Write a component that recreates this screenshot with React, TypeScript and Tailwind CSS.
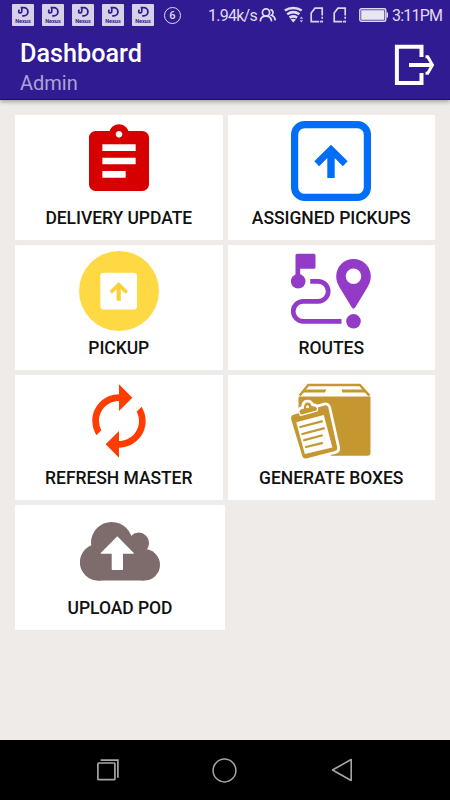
import type { ReactNode } from 'react'
import { MdAssignment, MdAutorenew } from 'react-icons/md'

function AppBadge() {
  return (
    <div className="flex h-[22px] w-[22px] flex-col items-center rounded-[1px] bg-[#d6d1e9] text-[#311b92]">
      <svg width="22" height="14" viewBox="0 0 22 14" fill="none" stroke="currentColor">
        <path d="M8.600 3.600h3.200a4.100 4.100 0 0 1 0 8.200h-1.600" strokeWidth="1.800" />
        <path d="M9.800 3.200v4.600M7.300 5.600C6.200 7.400 6.500 9 8.200 8.800l2-.7" strokeWidth="1.700" />
      </svg>
      <span className="text-[5.5px] leading-[7px] font-bold">Nexus</span>
    </div>
  )
}

function SimIcon() {
  return (
    <svg width="14" height="16" viewBox="0 0 14 16" fill="none" stroke="#d9d4ec" strokeWidth="1.700">
      <path d="M9 14.700H1.200V6L5 1.200h7.200v7.300" />
      <path d="M12.200 9.800v1.900M12.200 13.500v2M9.800 14.700h1.400" />
    </svg>
  )
}

function StatusBar() {
  return (
    <div className="flex h-[30px] items-center text-[16px] text-[#e0dcf0]">
      <div className="ml-3 flex w-[152px] gap-2">
        {[0, 1, 2, 3, 4].map((i) => (
          <AppBadge key={i} />
        ))}
      </div>
      <div className="flex h-[17px] w-[17px] items-center justify-center rounded-full border-[1.5px] border-[#e0dcf0] text-[11px] leading-none font-medium">
        6
      </div>
      <span className="ml-[27px] w-[50px] pt-px tracking-[-0.75px] whitespace-nowrap">1.94k/s</span>
      <svg className="ml-[1px]" width="18" height="16" viewBox="0 0 18 16" fill="none" stroke="#e0dcf0" strokeWidth="1.700">
        <circle cx="7" cy="5.500" r="3.600" />
        <path d="M1.200 14.300c.4-3.400 2.400-5.200 5.800-5.200s5.200 1.800 5.600 5.200M11.300 2.700c3 .2 3.800 4 1.200 5.600 2.500.8 3.500 2.500 3.800 5" />
      </svg>
      <svg className="ml-[7px]" width="20" height="18" viewBox="0 0 20 18" fill="none" stroke="#e0dcf0" strokeWidth="2.500">
        <path d="M.8 4.500c5-3.400 11.900-3.400 16.900 0M3.200 8.200c3.700-2.500 8.500-2.500 12.200 0M5.600 11.600c2.300-1.500 5.200-1.500 7.500 0" />
        <path d="M6.600 13.600c1.600-1 3.800-1 5.400 0L9.300 16.500z" fill="#e0dcf0" stroke="none" />
        <path d="m17.400 10.500 1.800 2.200h-3.600zM17.400 16.500l1.800-2.200h-3.600z" fill="#bdb4dc" stroke="none" />
      </svg>
      <div className="ml-[6px] flex gap-[9px]">
        <SimIcon />
        <SimIcon />
      </div>
      <svg className="ml-[12px]" width="30" height="14" viewBox="0 0 30 14" fill="none">
        <rect x=".8" y=".8" width="26" height="12.400" rx="1.500" stroke="#e0dcf0" strokeWidth="1.400" />
        <rect x="2.200" y="2.200" width="23.200" height="9.600" fill="#e9e6f4" />
        <path d="M27.500 4.500H29v5h-1.500" fill="#e0dcf0" />
      </svg>
      <span className="ml-[3px] pt-px tracking-[-0.8px] whitespace-nowrap">3:11PM</span>
    </div>
  )
}

function Header() {
  return (
    <header className="relative h-[100px] border-b border-[#1c0a80] bg-[#311b92] shadow-[0_2px_4px_rgba(0,0,0,0.3)]">
      <StatusBar />
      <div className="flex justify-between pr-[14px] pl-5">
        <div>
          <h1 className="pt-[10px] text-[25.2px] leading-[28px] font-medium text-white">Dashboard</h1>
          <p className="pt-[3px] text-[20px] leading-[24px] text-[#aca3d4]">Admin</p>
        </div>
        <svg className="mt-[14px]" width="42" height="42" viewBox="0 0 42 42" fill="none" stroke="#fff" strokeWidth="4">
          <path d="M27.500 13V2.800H2.900v36.200h24.600V29" />
          <path d="M15 21h23" strokeWidth="4" />
          <path d="M31.500 12.800h2.200L38.500 21l-4.800 8.200h-2.200" strokeWidth="3" />
        </svg>
      </div>
    </header>
  )
}

function AssignedIcon() {
  return (
    <svg width="80" height="80" viewBox="0 0 80 80" fill="#026df7">
      <rect x="3.600" y="3.600" width="72.800" height="72.800" rx="10" fill="none" stroke="#026df7" strokeWidth="7.200" />
      <path d="m40 23.700 16.700 16.600-4.900 4.900-8.100-8.100V57h-7.400V37.100l-8.100 8.100-4.900-4.900z" />
    </svg>
  )
}

function PickupIcon() {
  return (
    <svg width="80" height="80" viewBox="0 0 80 80">
      <circle cx="40" cy="40" r="40" fill="#ffd944" />
      <rect x="21.300" y="21.700" width="36.700" height="36.900" rx="3.500" fill="#fff" />
      <path d="m39.700 31 9.300 9.200-2.500 2.600-4.700-4.600v11.600h-4.200V38.200l-4.700 4.600-2.500-2.600z" fill="#fbcf38" />
    </svg>
  )
}

function RoutesIcon() {
  return (
    <svg width="80" height="80" viewBox="0 0 80 80" fill="#933ac6">
      <path d="M4.500 4.200q0-1.500 1.500-1.500h17q1.500 0 1.500 1.500v12q0 1.500-1.500 1.500H9.200v8H4.500z" />
      <circle cx="7.200" cy="30.300" r="7.300" />
      <path d="M19.200 30.300h8a10 10 0 0 1 0 20h-15a10 10 0 0 0 0 20h38.300" fill="none" stroke="#933ac6" strokeWidth="4.700" />
      <path
        fillRule="evenodd"
        d="M62.500 8a17.300 17.300 0 0 0-17.300 17.300c0 4 1.200 7.500 3.300 11l12.300 20.300q1.700 2.200 3.400 0l12.300-20.300c2.100-3.500 3.300-7 3.300-11A17.300 17.300 0 0 0 62.500 8zm0 9.500a7.800 7.800 0 1 1 0 15.600 7.800 7.800 0 0 1 0-15.600z"
      />
      <circle cx="62.500" cy="70.300" r="7.300" />
    </svg>
  )
}

function BoxesIcon() {
  return (
    <svg width="80" height="80" viewBox="0 0 80 80" fill="#c59730">
      <path d="M7.500 15.600h72v56.200q0 3-3 3H40L7.500 40z" />
      <path d="M8.700 14.600 17.300 4h51.500l9.600 10.600" fill="none" stroke="#c59730" strokeWidth="2.400" />
      <path d="M14 8.400h21.500l-1.700 3H11.700zM50.600 8.400h22.200l2.600 3h-24z" />
      {/* clipboard laid over the box, with a white edge */}
      <g stroke="#fff" strokeWidth="5.500" strokeLinejoin="round">
        <path d="m3 33.600 30.500-9.200q3-.8 3.800 2.200l8.900 39.700q.7 3-2.300 3.800l-28.700 7.300q-3 .8-3.800-2.200L.2 38.500q-.7-4 2.800-4.900z" />
        <path d="M8.400 30.700q.5-2.700 4.600-3.300-.3-5.400 3.200-5.900 3.300-.4 4.500 3.700 4.300-.5 5.300 2.600l-.5 1.700-15.700 4.300z" />
      </g>
      <path d="m3 33.600 30.500-9.200q3-.8 3.800 2.200l8.900 39.700q.7 3-2.300 3.800l-28.700 7.300q-3 .8-3.800-2.200L.2 38.500q-.7-4 2.800-4.900z" />
      <path d="m5.300 41.200 27.500-7.300 8.600 32.700-27.600 6.500z" fill="#fff" />
      <path
        d="M8.400 30.700q.5-2.700 4.600-3.300-.3-5.400 3.200-5.900 3.300-.4 4.500 3.700 4.300-.5 5.300 2.600l-.5 1.700-15.700 4.300z"
        stroke="#fff"
        strokeWidth="2.600"
        paintOrder="stroke"
      />
      <circle cx="16.500" cy="25.800" r="1.500" fill="#fff" />
      <path d="m9.300 46 21.500-5.700M11.300 53l21.500-5.700M13.200 59.200l17.600-4.700M15 66l16-3.900" fill="none" stroke="#c59730" strokeWidth="2.300" strokeLinecap="round" />
    </svg>
  )
}

function UploadIcon() {
  return (
    <svg width="80" height="80" viewBox="0 0 80 80" fill="#7e6b6b">
      <circle cx="18.300" cy="51.300" r="18.400" />
      <circle cx="31.700" cy="31.700" r="20.700" />
      <circle cx="58.700" cy="32" r="10.400" />
      <circle cx="64.200" cy="53.800" r="15.800" />
      <path d="M18.300 36h40l5.900 33.600H18.300z" />
      <path d="m37.300 25.300 16.500 16.600q.5.800-.5.800H43v15.500q0 .8-.8.800h-9.700q-.8 0-.8-.8V42.700H21.200q-1 0-.5-.8z" fill="#fff" />
    </svg>
  )
}

type TileProps = {
  label: string
  children: ReactNode
}

function Tile({ label, children }: TileProps) {
  return (
    <div className="flex h-[125px] flex-col items-center bg-white pt-[6px]">
      {children}
      <span className="mt-[7px] text-[17.5px] leading-5 font-medium tracking-[-0.05px] whitespace-nowrap text-[#111]">
        {label}
      </span>
    </div>
  )
}

function NavBar() {
  return (
    <nav className="flex h-[60px] items-center bg-black text-[#a5a5a5]">
      <svg className="ml-[96px]" width="24" height="24" viewBox="0 0 24 24" fill="none" stroke="currentColor" strokeWidth="1.700">
        <rect x="1.900" y="5" width="17" height="16.700" rx=".8" />
        <path d="M4.600 2.200h17.300v17.500" />
      </svg>
      <svg className="ml-[92px]" width="25" height="25" viewBox="0 0 25 25" fill="none" stroke="currentColor" strokeWidth="1.500">
        <circle cx="12.500" cy="12.500" r="11.400" />
      </svg>
      <svg className="ml-[94px]" width="22" height="24" viewBox="0 0 22 24" fill="none" stroke="currentColor" strokeWidth="1.600" strokeLinejoin="round">
        <path d="M20.200 1.500v21L1.500 12z" />
      </svg>
    </nav>
  )
}

export default function App() {
  return (
    <div className="flex h-[800px] w-[450px] flex-col overflow-hidden bg-[#efebe9] font-[Roboto,sans-serif]">
      <Header />
      <main className="flex-1 px-[15px] pt-[15px]">
        <div className="grid grid-cols-[207.5px_207.5px] gap-[5px]">
          <Tile label="DELIVERY UPDATE">
            <MdAssignment size={80} color="#d60000" />
          </Tile>
          <Tile label="ASSIGNED PICKUPS">
            <AssignedIcon />
          </Tile>
          <Tile label="PICKUP">
            <PickupIcon />
          </Tile>
          <Tile label="ROUTES">
            <RoutesIcon />
          </Tile>
          <Tile label="REFRESH MASTER">
            <MdAutorenew size={80} color="#ff3d00" />
          </Tile>
          <Tile label="GENERATE BOXES">
            <BoxesIcon />
          </Tile>
        </div>
        <div className="mt-[5px] w-[210px]">
          <Tile label="UPLOAD POD">
            <UploadIcon />
          </Tile>
        </div>
      </main>
      <NavBar />
    </div>
  )
}
